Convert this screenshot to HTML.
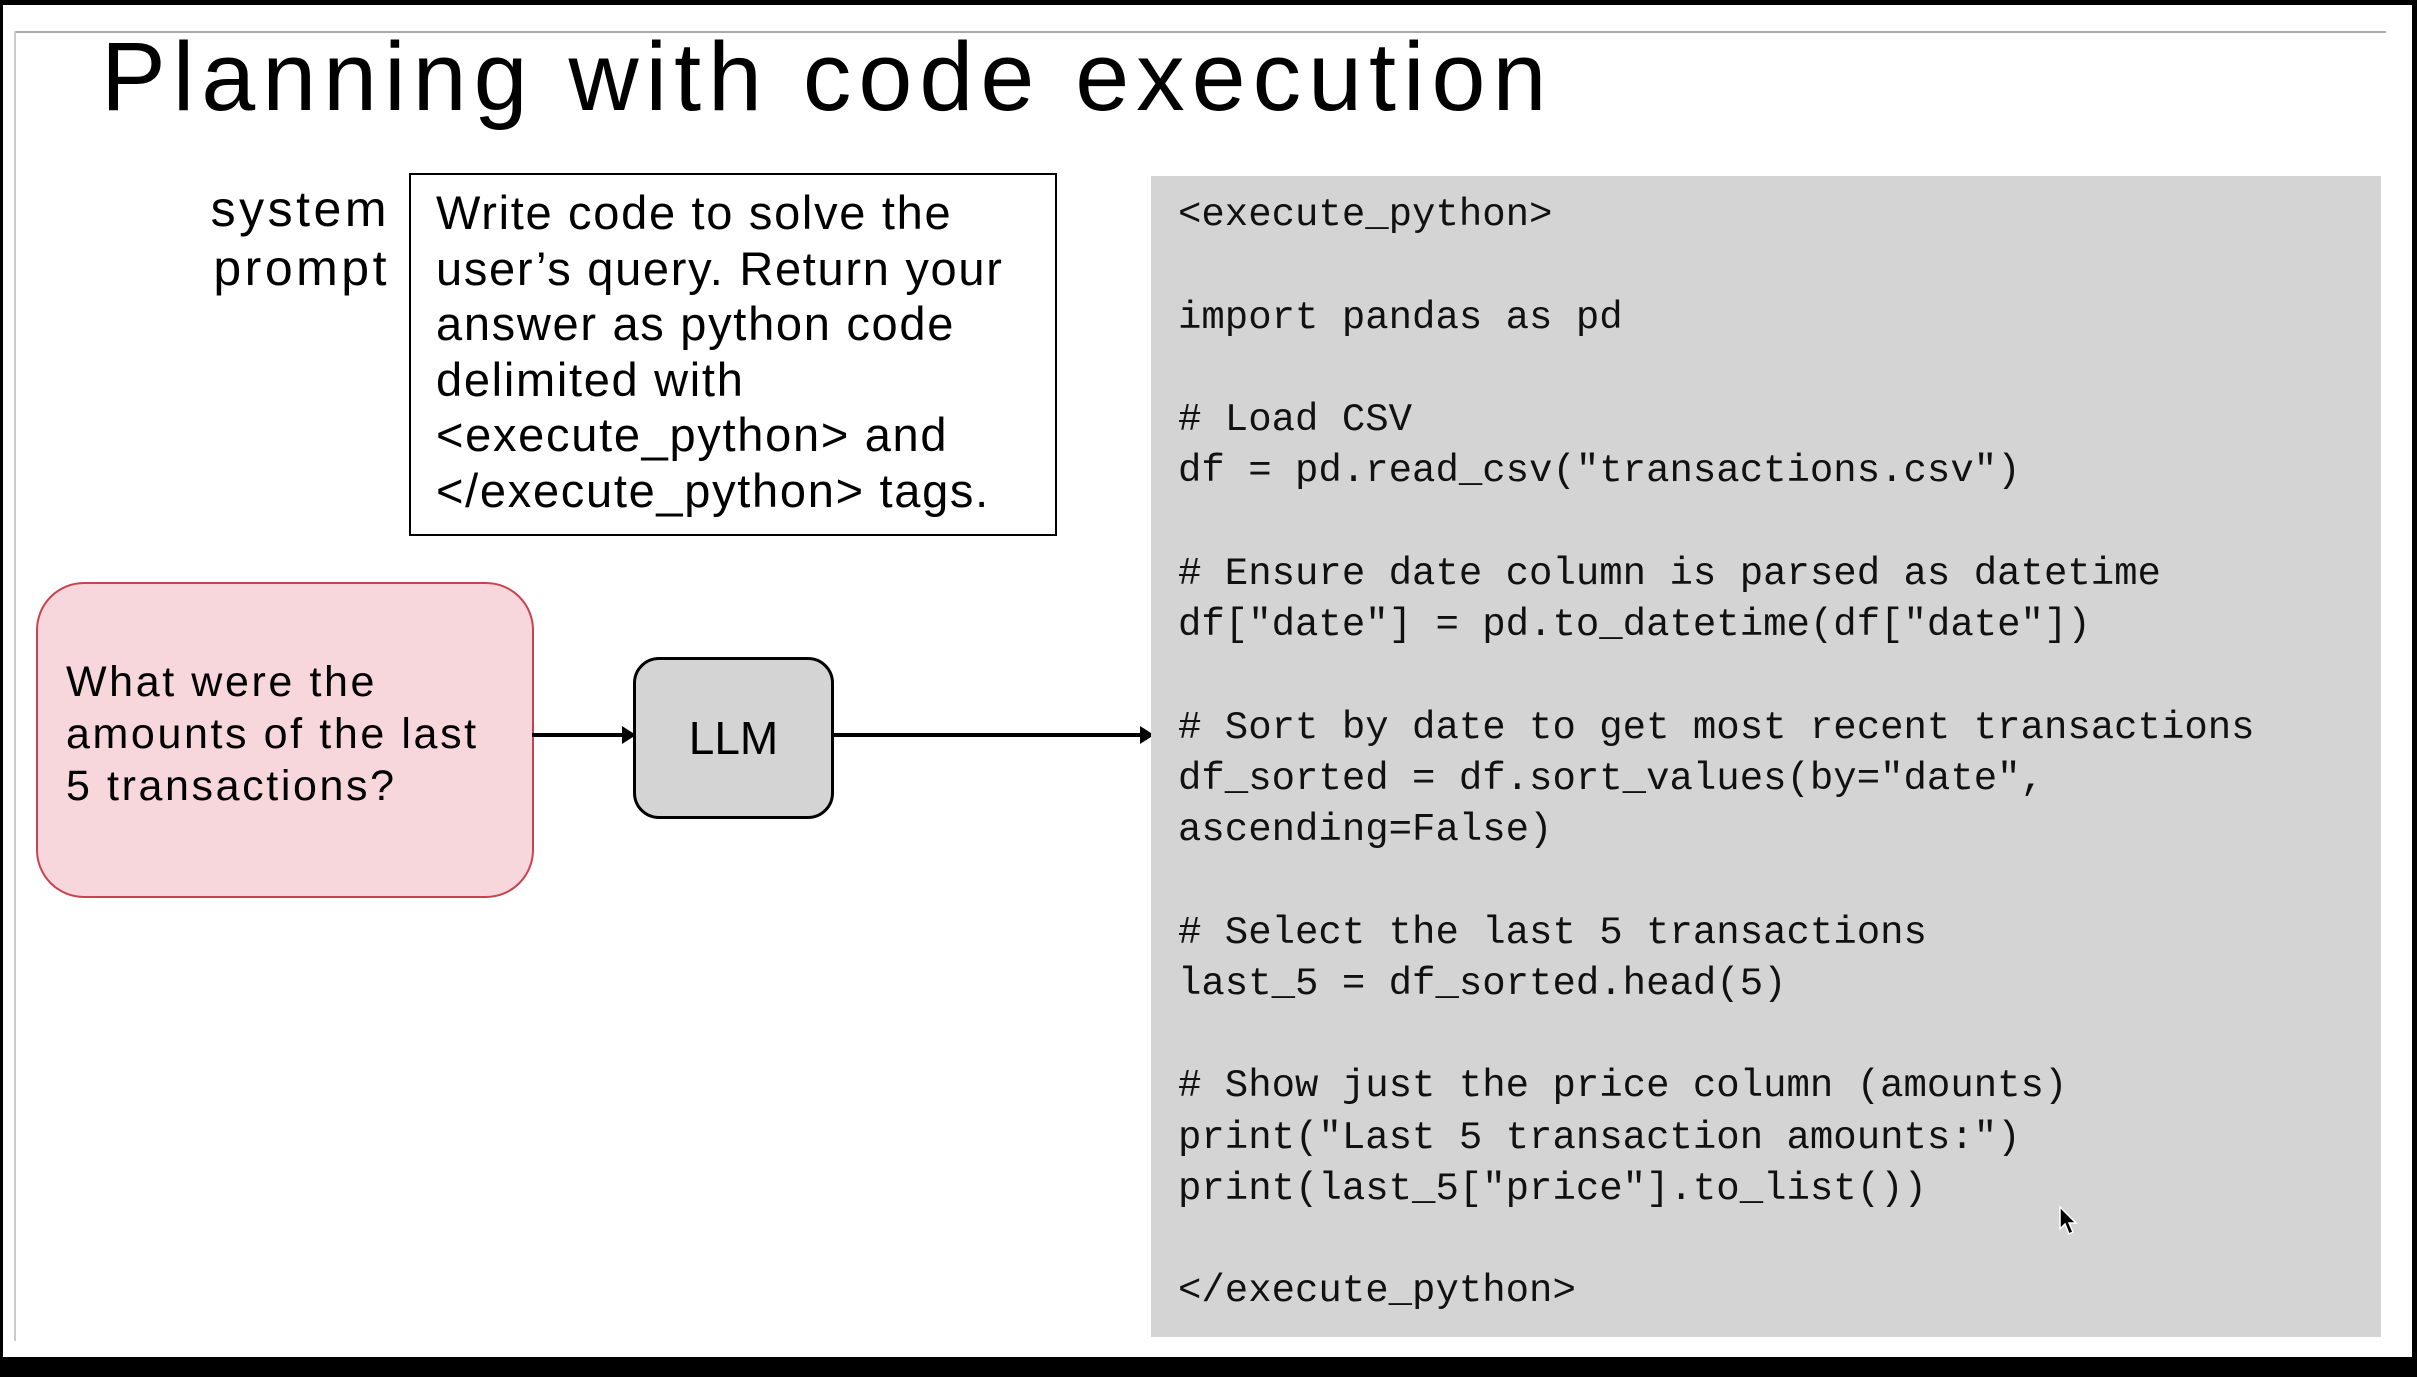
<!DOCTYPE html>
<html><head><meta charset="utf-8"><style>
html,body{margin:0;padding:0}
body{width:2417px;height:1377px;position:relative;background:#000;overflow:hidden;font-family:"Liberation Sans",sans-serif}
.page{position:absolute;left:3px;top:5px;width:2409px;height:1352px;background:#fff}
.abs{position:absolute;white-space:nowrap}
.code{position:absolute;left:1151px;top:176px;width:1230px;height:1161px;background:#d4d4d4}
.code pre{margin:0;position:absolute;left:27px;top:14px;font-family:"Liberation Mono",monospace;font-size:39px;line-height:51.25px;color:#111}
</style></head><body>
<div class="page"></div>
<div class="abs" style="left:14px;top:31px;width:2372px;height:2px;background:#aaa"></div>
<div class="abs" style="left:14px;top:31px;width:2px;height:1310px;background:#ccc"></div>

<div class="abs" style="left:101px;top:22px;font-size:97px;letter-spacing:7px;color:#000;line-height:110px">Planning with code execution</div>

<div class="abs" style="left:150px;top:180px;width:240px;text-align:right;font-size:50px;line-height:59px;letter-spacing:3.5px;color:#000;white-space:normal">system<br>prompt</div>

<div class="abs" style="left:409px;top:173px;width:644px;height:359px;border:2px solid #000;box-sizing:content-box"></div>
<div class="abs" style="left:436px;top:185px;font-size:47px;line-height:55.5px;letter-spacing:1.7px;color:#000">Write code to solve the<br>user’s query. Return your<br>answer as python code<br>delimited with<br>&lt;execute_python&gt; and<br>&lt;/execute_python&gt; tags.</div>

<div class="abs" style="left:36px;top:582px;width:494px;height:312px;background:#f8d7dc;border:2.5px solid #c9434f;border-radius:48px"></div>
<div class="abs" style="left:66px;top:656px;font-size:43px;line-height:52px;letter-spacing:2.6px;color:#000">What were the<br>amounts of the last<br>5 transactions?</div>

<div class="abs" style="left:633px;top:657px;width:195px;height:156px;background:#d4d4d4;border:3px solid #000;border-radius:26px;text-align:center;line-height:156px;font-size:46px;color:#000">LLM</div>

<svg class="abs" style="left:0;top:0" width="2417" height="1377">
<line x1="532" y1="735" x2="624" y2="735" stroke="#000" stroke-width="4"/>
<polygon points="622,726 636,735 622,744" fill="#000"/>
<line x1="834" y1="735" x2="1142" y2="735" stroke="#000" stroke-width="4"/>
<polygon points="1140,726 1154,735 1140,744" fill="#000"/>
</svg>

<div class="code"><pre>&lt;execute_python&gt;

import pandas as pd

# Load CSV
df = pd.read_csv("transactions.csv")

# Ensure date column is parsed as datetime
df["date"] = pd.to_datetime(df["date"])

# Sort by date to get most recent transactions
df_sorted = df.sort_values(by="date",
ascending=False)

# Select the last 5 transactions
last_5 = df_sorted.head(5)

# Show just the price column (amounts)
print("Last 5 transaction amounts:")
print(last_5["price"].to_list())

&lt;/execute_python&gt;</pre></div>

<svg class="abs" style="left:2058px;top:1205px" width="24" height="34">
<path d="M2 2 L2 24 L7 19 L11 29 L15 27 L11 18 L18 18 Z" fill="#000" stroke="#fff" stroke-width="1.5"/>
</svg>
</body></html>
